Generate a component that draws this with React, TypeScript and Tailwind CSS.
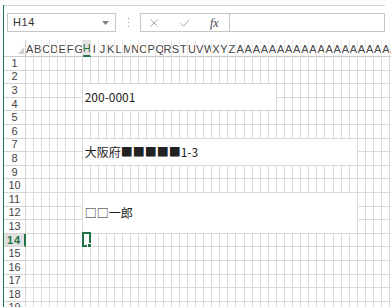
import React from 'react';

const LETTERS = 'ABCDEFGHIJKLMNOPQRSTUVWXYZ';
const COL_COUNT = 46;
const ROW_COUNT = 19;
const SEL = { row: 13, col: 7 };

type Merge = {
  text: string;
  row: number;
  col: number;
  rows: number;
  cols: number;
  place: string;
};

// merged white cells (0-based row / col in the sheet)
const merges: Merge[] = [
  { text: '200-0001', row: 2, col: 7, rows: 2, cols: 24, place: 'row-start-4 row-span-2 col-start-9 col-span-24' },
  { text: '大阪府■■■■■1-3', row: 6, col: 7, rows: 2, cols: 34, place: 'row-start-8 row-span-2 col-start-9 col-span-34' },
  { text: '□□一郎', row: 10, col: 7, rows: 3, cols: 34, place: 'row-start-12 row-span-3 col-start-9 col-span-34' },
];

function colName(i: number) {
  return i < 26 ? LETTERS[i] : 'A' + LETTERS[i - 26];
}

function covered(r: number, c: number) {
  return merges.some((m) => r >= m.row && r < m.row + m.rows && c >= m.col && c < m.col + m.cols);
}

function FormulaBar() {
  return (
    <div className="flex h-[35px] w-[381px] shrink-0 items-start border-t border-[#d4d4d4] pt-[7px]">
      <div className="ml-[3px] flex h-[19px] w-[109px] items-center justify-between border border-[#c6c6c6] pl-[5px] pr-[6px]">
        <span className="text-[11px] tracking-[0.6px] text-[#333]">H14</span>
        <svg width="7" height="4" viewBox="0 0 7 4">
          <path d="M0 0h7L3.5 4z" fill="#808080" />
        </svg>
      </div>
      <div className="flex h-[19px] w-[24px] flex-col items-center justify-center gap-[3px]">
        <span className="h-[1px] w-[1px] bg-[#999]" />
        <span className="h-[1px] w-[1px] bg-[#999]" />
        <span className="h-[1px] w-[1px] bg-[#999]" />
      </div>
      <div className="flex h-[19px] flex-1 border border-[#c6c6c6]">
        <div className="flex w-[89px] items-center border-r border-[#c6c6c6]">
          <svg className="ml-[9px]" width="8" height="8" viewBox="0 0 8 8">
            <path d="M0.5 0.5l7 7M7.5 0.5l-7 7" stroke="#a6a6a6" strokeWidth="1" />
          </svg>
          <svg className="ml-[22px]" width="10" height="8" viewBox="0 0 10 8">
            <path d="M0.5 4.2l3 3 6-6.7" stroke="#a6a6a6" strokeWidth="1" fill="none" />
          </svg>
          <span className="ml-[20px] font-['Liberation_Serif',serif] text-[12px] italic text-[#444]">fx</span>
        </div>
        <div className="flex-1" />
      </div>
    </div>
  );
}

function Sheet() {
  const cells: React.ReactNode[] = [];

  cells.push(
    <div key="corner" className="flex items-end justify-end border-r border-b border-[#c8c8c8] pr-[1px] pb-[2px]">
      <svg width="6" height="7" viewBox="0 0 6 7">
        <path d="M6 0v7H0z" fill="#d0d0d0" />
      </svg>
    </div>
  );

  for (let c = 0; c < COL_COUNT; c++) {
    const on = c === SEL.col;
    cells.push(
      <div
        key={'h' + c}
        className={
          'flex items-center overflow-hidden border-r border-b pt-[2px] text-[11px] leading-none [justify-content:safe_center] ' +
          (on ? 'border-b-2 border-r-[#e4e4e4] border-b-[#217346] bg-[#e1e1e1] text-[#217346]' : 'border-r-[#ececec] border-b-[#c8c8c8] text-[#444]')
        }
      >
        {colName(c)}
      </div>
    );
  }

  for (let r = 0; r < ROW_COUNT; r++) {
    const on = r === SEL.row;
    cells.push(
      <div
        key={'r' + r}
        className={
          'flex items-center justify-center border-b text-[11px] leading-none ' +
          (on
            ? 'border-r-2 border-r-[#217346] border-b-[#d4d4d4] bg-[#e1e1e1] font-bold tracking-[1px] text-[#217346]'
            : 'border-r border-[#d4d4d4] text-[#444]')
        }
      >
        {r + 1}
      </div>
    );
    for (let c = 0; c < COL_COUNT; c++) {
      if (covered(r, c)) continue;
      const sel = r === SEL.row && c === SEL.col;
      cells.push(
        <div key={r + '-' + c} className="relative border-r border-b border-[#dadada]">
          {sel && (
            <div className="absolute -top-[2px] -left-[1px] -right-[1px] -bottom-[1px] z-10 border-2 border-[#217346]">
              <div className="absolute -right-[3px] -bottom-[3px] h-[5px] w-[5px] border border-white bg-[#217346]" />
            </div>
          )}
        </div>
      );
    }
  }

  return (
    <div className="grid shrink-0 grid-cols-[22px_repeat(46,8.1px)] grid-rows-[17px_repeat(19,13.6px)]">
      {cells}
      {merges.map((m) => (
        <div
          key={m.text}
          className={
            m.place +
            " flex items-center border-r border-b border-[#dadada] bg-white pl-[2px] font-['Noto_Sans_CJK_JP','Noto_Sans',sans-serif] text-[12px] leading-none whitespace-nowrap text-[#222]"
          }
        >
          {m.text}
        </div>
      ))}
    </div>
  );
}

export default function App() {
  return (
    <div className="h-[307px] w-[391px] overflow-hidden bg-white pt-[5px] pl-[3px] font-['Liberation_Sans',Arial,sans-serif]">
      <div className="flex h-full flex-col border-l border-[#217346]">
        <FormulaBar />
        <Sheet />
      </div>
    </div>
  );
}
